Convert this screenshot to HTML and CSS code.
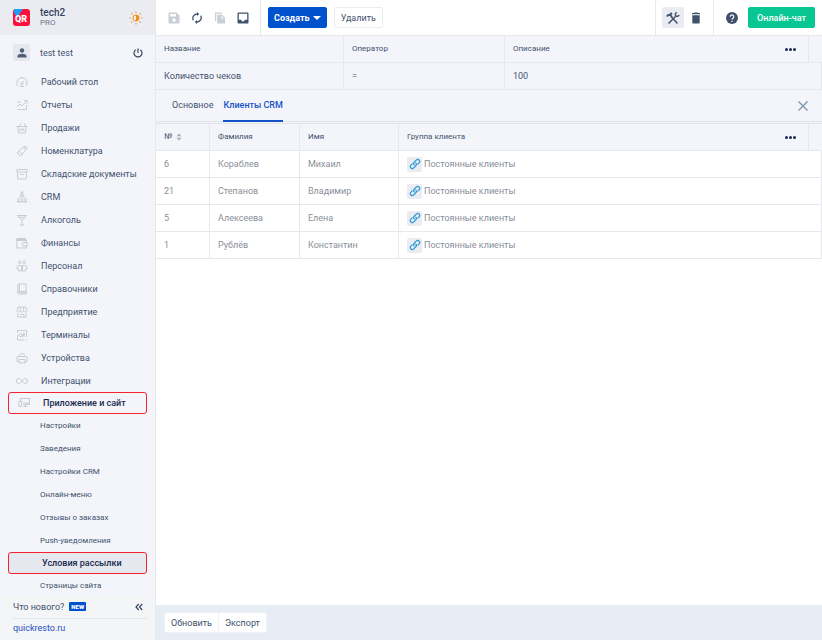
FILE: index.html
```
<!DOCTYPE html>
<html lang="ru">
<head>
    <meta charset="UTF-8">
    <meta name="viewport" content="width=device-width, initial-scale=1.0">
    <title>Условия рассылки</title>
    <link rel="stylesheet" href="styles.css">
</head>
<body>
    <aside class="sidebar">
        <div class="account">
            <svg class="logo" viewBox="0 0 17 17">
                <rect width="17" height="17" rx="3" fill="#ff0f3c"/>
                <path d="M1 0h9L7 4 4 9 1 3z" fill="#18a0fb"/>
                <text x="2" y="13" class="logo-text">QR</text>
            </svg>
            <div class="account-name">
                <strong>tech2</strong>
                <span>PRO</span>
            </div>
            <button class="icon-btn theme" aria-label="Тема">
                <svg viewBox="0 0 14 14" width="14" height="14">
                    <circle cx="7" cy="7" r="3" fill="#fff3e0" stroke="#f58a1f"/>
                    <path d="M7 4a3 3 0 0 1 0 6z" fill="#f58a1f"/>
                    <path d="M7 .5v1.3M7 12.2v1.3M.5 7h1.3M12.2 7h1.3M2.4 2.4l1 1M10.6 10.6l1 1M2.4 11.6l1-1M10.6 3.4l1-1" stroke="#f58a1f" stroke-width="1.2"/>
                </svg>
            </button>
        </div>
        <div class="user">
            <span class="avatar">
                <svg viewBox="0 0 10 10" width="10" height="10" fill="#505f79"><circle cx="5" cy="2.5" r="2.2"/><path d="M.5 9.500V8.200C.5 6.600 3 5.800 5 5.800s4.500.8 4.500 2.400v1.300z"/></svg>
            </span>
            <span class="user-name">test test</span>
            <button class="icon-btn" aria-label="Выйти">
                <svg viewBox="0 0 10 10" width="10" height="10" fill="none" stroke="#344563" stroke-width="1.2"><path d="M5 .5v4.500M2.700 1.700a4 4 0 1 0 4.600 0"/></svg>
            </button>
        </div>

        <nav class="menu">
            <a href="#"><svg viewBox="0 0 12 12"><path d="M2 10.500a5.300 5.300 0 1 1 8 0M4 10.500h4M6 8l2-3M2.500 6h1M6 2v1M9 7h1"/><circle cx="5.700" cy="8" r="1"/></svg>Рабочий стол</a>
            <a href="#"><svg viewBox="0 0 12 12"><path d="M5 3H1.500M1.500 10.500h9V6M1 8l3-3 2 2 5-5.500M8 1.500h3v3"/></svg>Отчеты</a>
            <a href="#"><svg viewBox="0 0 12 12"><path d="M.5 4.500h11M1.800 4.500l.8 6.500h6.800l.8-6.500M3 4.500L5 1.500M9 4.500V1M4.300 6.500v2.500M6 6.500v2.500M7.700 6.500v2.500"/></svg>Продажи</a>
            <a href="#"><svg viewBox="0 0 12 12"><path d="M1 8l6-5.500c1-1.500 4-1.500 4 .5 0 1-.5 1.500-1 2L4.500 11zM3 6.200l3.300 3.300"/><circle cx="8.800" cy="3.400" r=".6"/></svg>Номенклатура</a>
            <a href="#"><svg viewBox="0 0 12 12"><path d="M.8 1.500h10.400v2.500H.8zM1.600 4v7h8.800V4M4.300 6.500h3.400"/></svg>Складские документы</a>
            <a href="#"><svg viewBox="0 0 12 12"><circle cx="6" cy="1.800" r="1.100"/><path d="M4 4.800c0-2 4-2 4 0zM6 4.800v2.500M2.500 7.500L5 5.500M9.500 7.500L7 5.500M1 11c0-1.500 3-1.500 3 0zM4.500 11c0-1.500 3-1.500 3 0zM8 11c0-1.500 3-1.500 3 0z"/><circle cx="2.500" cy="8.600" r=".7"/><circle cx="6" cy="8.600" r=".7"/><circle cx="9.500" cy="8.600" r=".7"/></svg>CRM</a>
            <a href="#"><svg viewBox="0 0 12 12"><path d="M1.300 1.500h9.400L6 6.500zM3 3.300h6M6 6.500V11M3.500 11h5"/></svg>Алкоголь</a>
            <a href="#"><svg viewBox="0 0 12 12"><path d="M.8 1.500v9.500h9.700V9M.8 3.500h9.700v2M.8 1.500h8.700v2M.8 2.500h8.700M11 5.500H8a1.700 1.700 0 0 0 0 3.500h3z"/></svg>Финансы</a>
            <a href="#"><svg viewBox="0 0 12 12"><circle cx="3.800" cy="2.300" r="1.300"/><circle cx="8.200" cy="2.300" r="1.300"/><path d="M5.500 5.500H3a2 2 0 0 0-2 2V9h1.500v2h3zM6.500 5.500H9a2 2 0 0 1 2 2V9H9.500v2h-3z"/></svg>Персонал</a>
            <a href="#"><svg viewBox="0 0 12 12"><path d="M1.800 9.500V2a1 1 0 0 1 1-1h7.400v7.500H3a1.200 1.200 0 0 0 0 2.500h7.200V8.500M3.500 9.800h6.700M3.500 1v7.500"/></svg>Справочники</a>
            <a href="#"><svg viewBox="0 0 12 12"><path d="M2 1h8l1 3.500c0 2-3.300 2-3.300 0 0 2-3.400 2-3.400 0 0 2-3.300 2-3.300 0zM4.300 1v3.500M7.700 1v3.500M1.800 7v4h8.400V7M4 8.500h4V11"/></svg>Предприятие</a>
            <a href="#"><svg viewBox="0 0 12 12"><path d="M1.500 4V1.500H10.500V8M1.500 6v5h7M10.500 10v1M5.300 7.500L6 8.500M7 8V4.500h1.500v1.800H7l1.700 1.700"/><circle cx="4.500" cy="6.200" r="1.500"/></svg>Терминалы</a>
            <a href="#"><svg viewBox="0 0 12 12"><path d="M3.500 3.500C3.500 1 8.500 1 8.500 3.500M3 9.500H1V5.500a1 1 0 0 1 1-1h8a1 1 0 0 1 1 1v4H9M3 7.500h6V11H3z"/></svg>Устройства</a>
            <a href="#"><svg viewBox="0 0 12 12"><path d="M6 6C4.800 4.300 4 3.500 2.900 3.500a2.500 2.500 0 0 0 0 5C4 8.500 4.800 7.700 6 6s2-2.500 3.100-2.500a2.500 2.500 0 0 1 0 5C8 8.500 7.200 7.700 6 6z"/></svg>Интеграции</a>
            <a href="#" class="marked"><svg viewBox="0 0 12 12"><path d="M2.500 4V1.500h9v6H5M5 6h6.500M7.500 7.500v2M5.500 9.500h4M.8 4.500h2.700v5H.8z"/></svg>Приложение и сайт</a>
            <div class="submenu">
                <a href="#">Настройки</a>
                <a href="#">Заведения</a>
                <a href="#">Настройки CRM</a>
                <a href="#">Онлайн-меню</a>
                <a href="#">Отзывы о заказах</a>
                <a href="#">Push-уведомления</a>
                <a href="#" class="marked current">Условия рассылки</a>
                <a href="#">Страницы сайта</a>
            </div>
        </nav>

        <div class="sidebar-footer">
            <div class="news">
                <span>Что нового?</span>
                <span class="badge">NEW</span>
                <button class="icon-btn" aria-label="Свернуть меню">
                    <svg viewBox="0 0 8 8" width="8" height="8" fill="none" stroke="#344563" stroke-width="1.200"><path d="M3.700 1L1 4l2.700 3M7.200 1L4.500 4l2.700 3"/></svg>
                </button>
            </div>
            <a href="#" class="site">quickresto.ru</a>
        </div>
    </aside>

    <main class="content">
        <header class="toolbar">
            <div class="tools">
                <button class="icon-btn" aria-label="Сохранить" disabled>
                    <svg viewBox="0 0 12 12" width="12" height="12"><path fill="#c9ced7" fill-rule="evenodd" d="M1.500.5H8.500L11.500 3.500v7a1 1 0 0 1-1 1h-9a1 1 0 0 1-1-1v-9a1 1 0 0 1 1-1zM2 2v2.500h6V2zM6 6.300a1.800 1.800 0 1 0 0 3.600 1.800 1.800 0 0 0 0-3.600z"/></svg>
                </button>
                <button class="icon-btn" aria-label="Обновить">
                    <svg viewBox="0 0 12 12" width="12" height="12" fill="none" stroke="#42526e" stroke-width="1.300"><path d="M2.300 8.400A4.300 4.300 0 0 1 6 2M9.700 3.600A4.300 4.300 0 0 1 6 10"/><path d="M6 0v4L8.200 2zM6 12V8L3.800 10z" fill="#42526e" stroke="none"/></svg>
                </button>
                <button class="icon-btn" aria-label="Копировать" disabled>
                    <svg viewBox="0 0 12 12" width="12" height="12" fill="#c9ced7"><path d="M1 .5h7v1.200H2.200V9H1z"/><path fill-rule="evenodd" d="M3.200 2.700H8L11 5.700v5.800H3.200zM7.200 3.700v2.800H10z"/></svg>
                </button>
                <button class="icon-btn" aria-label="Архив">
                    <svg viewBox="0 0 12 12" width="12" height="12"><path fill="#42526e" fill-rule="evenodd" d="M1.500.5h9a1 1 0 0 1 1 1v9a1 1 0 0 1-1 1h-9a1 1 0 0 1-1-1v-9a1 1 0 0 1 1-1zM1.800 1.800v6h2.400a1.800 1.800 0 0 0 3.600 0h2.400v-6z"/></svg>
                </button>
            </div>
            <div class="actions">
                <button class="btn primary">Создать <span class="caret"></span></button>
                <button class="btn">Удалить</button>
            </div>
            <div class="tools manage">
                <button class="icon-btn active" aria-label="Инструменты">
                    <svg viewBox="0 0 14 14" width="14" height="14" fill="none" stroke="#42526e"><path d="M5 5.500l6.500 7M2.500 12.500L9.500 5.500" stroke-width="1.500"/><path d="M1 5.500l1.500-2M2.500 4.500L6 2.200" stroke-width="2"/><path d="M4 3.500l2 2.500" stroke-width="1.800"/><path d="M10.700 1.500a2.200 2.200 0 0 0-1 3.300 2.300 2.300 0 0 0 3.500-.8" stroke-width="1.500"/></svg>
                </button>
                <button class="icon-btn" aria-label="Корзина">
                    <svg viewBox="0 0 10 12" width="10" height="12" fill="#42526e"><path d="M1 1h2L3.700.5h2.600L7 1h2v1.300H1zM1.300 3.200h7.400v7.300a1 1 0 0 1-1 1H2.300a1 1 0 0 1-1-1z"/></svg>
                </button>
            </div>
            <div class="support">
                <button class="icon-btn" aria-label="Помощь">
                    <svg viewBox="0 0 12 12" width="12" height="12"><circle cx="6" cy="6" r="6" fill="#42526e"/><path d="M4.200 4.700a1.800 1.800 0 1 1 2.700 1.600C6.200 6.700 6 7 6 7.800" fill="none" stroke="#fff" stroke-width="1.100"/><circle cx="6" cy="9.400" r=".7" fill="#fff"/></svg>
                </button>
                <button class="btn chat">Онлайн-чат</button>
            </div>
        </header>

        <table class="grid conditions">
            <colgroup><col class="c-title"><col class="c-operator"><col><col class="c-more"><col class="c-edge"></colgroup>
            <thead>
                <tr>
                    <th>Название</th>
                    <th>Оператор</th>
                    <th>Описание</th>
                    <th class="more"><button class="dots" aria-label="Ещё"><i></i><i></i><i></i></button></th>
                    <th></th>
                </tr>
            </thead>
            <tbody>
                <tr>
                    <td>Количество чеков</td>
                    <td>=</td>
                    <td colspan="3">100</td>
                </tr>
            </tbody>
        </table>

        <div class="tabs">
            <button class="tab">Основное</button>
            <button class="tab selected">Клиенты CRM</button>
            <button class="icon-btn close" aria-label="Закрыть">
                <svg viewBox="0 0 10 10" width="10" height="10" stroke="#7a93ab" stroke-width="1.300"><path d="M.5.5l9 9M9.500.5l-9 9"/></svg>
            </button>
        </div>

        <table class="grid clients">
            <colgroup><col class="c-num"><col class="c-surname"><col class="c-name"><col><col class="c-more"><col class="c-edge"></colgroup>
            <thead>
                <tr>
                    <th>№ <svg class="sort" viewBox="0 0 6 8" width="6" height="8" fill="#a5adba"><path d="M.5 3.200L3 .5l2.500 2.700zM.5 4.800L3 7.500l2.500-2.700z"/></svg></th>
                    <th>Фамилия</th>
                    <th>Имя</th>
                    <th>Группа клиента</th>
                    <th class="more"><button class="dots" aria-label="Ещё"><i></i><i></i><i></i></button></th>
                    <th></th>
                </tr>
            </thead>
            <tbody id="clients"></tbody>
        </table>

        <footer class="bottom">
            <button class="btn">Обновить</button><button class="btn">Экспорт</button>
        </footer>
    </main>

    <script>
        const clients = [
            [6, 'Кораблев', 'Михаил'],
            [21, 'Степанов', 'Владимир'],
            [5, 'Алексеева', 'Елена'],
            [1, 'Рублёв', 'Константин'],
        ];
        const link = `<a href="#" class="link" aria-label="Открыть группу"><svg viewBox="0 0 12 12" width="12" height="12" fill="none" stroke="#2b9bd7" stroke-width="1.200" stroke-linecap="round"><path d="M5.200 6.900C4.300 6 4.500 4.900 5.400 4L7.200 2.100a2 2 0 0 1 2.900 2.800L8.800 6.200M6.800 5.100c.9.900.7 2-.2 2.900L4.800 9.900a2 2 0 0 1-2.900-2.800L3.200 5.800"/></svg></a>`;

        document.getElementById('clients').innerHTML = clients.map(([id, surname, name]) => `
            <tr>
                <td>${id}</td>
                <td>${surname}</td>
                <td>${name}</td>
                <td colspan="3"><div class="group">${link}Постоянные клиенты</div></td>
            </tr>`).join('');
    </script>
</body>
</html>
```
FILE: styles.css
```
* {
    box-sizing: border-box;
}
body {
    margin: 0;
    display: flex;
    min-height: 100vh;
    font-family: Roboto, "Liberation Sans", sans-serif;
    font-size: 9px;
    line-height: 12px;
    color: #42526e;
    background: #fff;
}
a {
    color: inherit;
    text-decoration: none;
}
button {
    font: inherit;
    color: inherit;
    cursor: pointer;
}
svg {
    display: block;
    flex: none;
}
.icon-btn {
    display: flex;
    align-items: center;
    justify-content: center;
    padding: 0;
    border: 0;
    background: none;
}

/* Sidebar */
.sidebar {
    display: flex;
    flex-direction: column;
    flex: none;
    width: 156px;
    background: #f4f5fa;
    border-right: 1px solid #e6e8ee;
}
.account {
    display: flex;
    align-items: center;
    height: 35px;
    padding: 0 12px 0 13px;
    background: #ebecf2;
}
.logo {
    width: 17px;
    height: 17px;
}
.logo-text {
    font-size: 9px;
    font-weight: 900;
    fill: #fff;
}
.account-name {
    flex: 1;
    margin-left: 10px;
    line-height: 10px;
    font-size: 8px;
}
.account-name strong {
    display: block;
    font-size: 10px;
    font-weight: 500;
    color: #344563;
}
.account-name span {
    color: #6b778c;
}
.user {
    display: flex;
    align-items: center;
    height: 35px;
    padding: 0 12px 0 13px;
}
.avatar {
    display: flex;
    align-items: center;
    justify-content: center;
    width: 17px;
    height: 17px;
    border-radius: 2px;
    background: #e6e8f0;
}
.user-name {
    flex: 1;
    margin-left: 10px;
}
.menu a {
    display: flex;
    align-items: center;
    height: 23px;
    padding-left: 16px;
}
.menu svg {
    width: 12px;
    height: 12px;
    margin-right: 13px;
    fill: none;
    stroke: #bcc1ca;
    stroke-width: 0.8;
}
.menu .marked {
    height: 22px;
    margin: 0 8px;
    padding-left: 9px;
    border: 1px solid #f5222d;
    border-radius: 3px;
    font-weight: 500;
    color: #172b4d;
}
.submenu a {
    padding-left: 40px;
    font-size: 8px;
}
.submenu .marked {
    padding-left: 33px;
    font-size: 9px;
}
.menu .current {
    background: #e6e8f0;
}
.sidebar-footer {
    margin-top: auto;
    padding: 0 8px 6px 13px;
    background: #f4f5f7;
}
.news {
    display: flex;
    align-items: center;
    height: 22px;
    padding-bottom: 2px;
    border-bottom: 1px solid #e3e5ea;
}
.badge {
    margin-left: 5px;
    padding: 0 2px;
    border-radius: 1px;
    background: #0052cc;
    color: #fff;
    font-size: 6px;
    font-weight: 900;
    line-height: 9px;
}
.news .icon-btn {
    margin-left: auto;
    margin-right: 4px;
}
.site {
    display: block;
    margin-top: 3px;
    color: #1d4fc4;
}

/* Toolbar */
.content {
    display: flex;
    flex-direction: column;
    flex: 1;
    min-width: 0;
}
.toolbar {
    display: flex;
    height: 36px;
    border-bottom: 1px solid #e6e8ee;
}
.tools, .actions, .support {
    display: flex;
    align-items: center;
    height: 35px;
}
.tools {
    gap: 11px;
    padding: 0 11px 0 12px;
    border-right: 1px solid #e6e8ee;
}
.actions {
    flex: 1;
    gap: 7px;
    padding-left: 7px;
}
.manage {
    gap: 7px;
    padding: 0 12px 0 6px;
    border-left: 1px solid #e6e8ee;
}
.active {
    width: 22px;
    height: 21px;
    border-radius: 2px;
    background: #ebecf2;
}
.support {
    gap: 10px;
    padding: 0 7px 0 12px;
}
.btn {
    height: 21px;
    padding: 0 6px;
    border: 1px solid #ebecf0;
    border-radius: 2px;
    background: #fff;
}
.primary {
    display: flex;
    align-items: center;
    gap: 3px;
    padding: 0 5px;
    border-color: #0052cc;
    background: #0052cc;
    color: #fff;
    font-weight: 700;
}
.caret {
    border: 4px solid transparent;
    border-top-color: #fff;
    border-bottom: 0;
}
.chat {
    padding: 0 8px;
    border-color: #08c792;
    background: #08c792;
    color: #fff;
    font-weight: 500;
}

/* Tables */
.grid {
    width: 100%;
    table-layout: fixed;
    border-collapse: separate;
    border-spacing: 0;
}
.grid th, .grid td {
    height: 27px;
    padding: 0 8px;
    border-right: 1px solid #e6e8ee;
    border-bottom: 1px solid #e6e8ee;
    text-align: left;
    font-weight: 400;
}
.grid th {
    font-size: 8px;
    background: #f4f5fa;
}
.grid th:last-child {
    border-right: 0;
}
.grid th:nth-last-child(3) {
    border-right: 0;
}
.grid .more {
    padding: 0 12px 0 0;
}
.conditions td {
    background: #f4f5fa;
}
.clients td {
    color: #8a8f99;
}
.c-title {
    width: 188px;
}
.c-operator {
    width: 161px;
}
.c-num {
    width: 54px;
}
.c-surname {
    width: 90px;
}
.c-name {
    width: 99px;
}
.c-more {
    width: 36px;
}
.c-edge {
    width: 13px;
}
.dots {
    display: flex;
    gap: 1px;
    margin-left: auto;
    padding: 4px 0;
    border: 0;
    background: none;
}
.dots i {
    width: 3px;
    height: 3px;
    border-radius: 50%;
    background: #172b4d;
}
.sort {
    display: inline-block;
    margin-left: 2px;
    vertical-align: middle;
}
.group {
    display: flex;
    align-items: center;
    gap: 2px;
}
.link {
    display: flex;
    align-items: center;
    justify-content: center;
    width: 15px;
    height: 15px;
    border-radius: 2px;
    background: #ebecf2;
}

/* Tabs */
.tabs {
    display: flex;
    gap: 10px;
    height: 34px;
    padding: 0 14px 0 16px;
    background: #f4f5fa;
    border-bottom: 3px double #e0e3ea;
}
.tab {
    padding: 0;
    border: 0;
    border-bottom: 1px solid transparent;
    background: none;
}
.selected {
    border-bottom: 1px solid #1552c8;
    box-shadow: 0 1px #1552c8;
    color: #1552c8;
    font-weight: 500;
}
.close {
    margin-left: auto;
}

.bottom {
    display: flex;
    margin-top: auto;
    padding: 7px 8px;
    background: #e6edf4;
}
.bottom .btn {
    border-color: #f0f2f5;
}
.bottom .btn + .btn {
    margin-left: -1px;
}
```
